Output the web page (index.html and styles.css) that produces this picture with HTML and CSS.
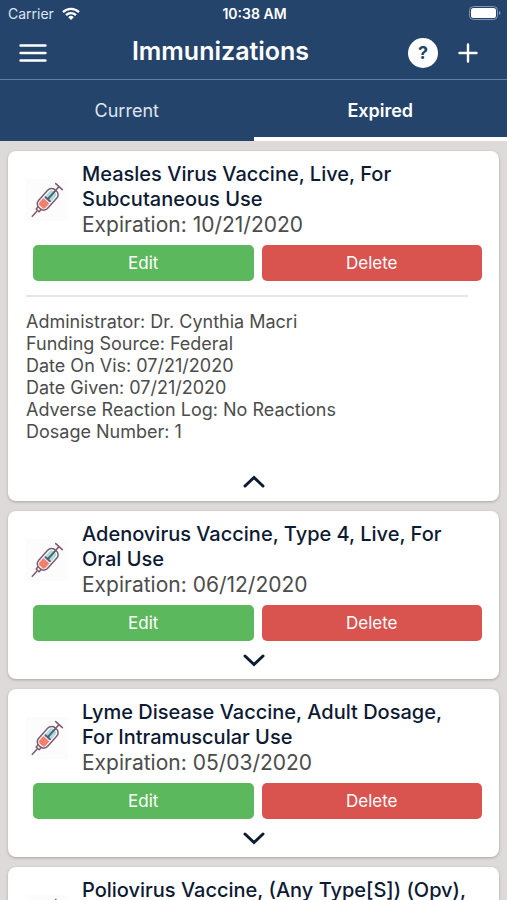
FILE: index.html
```
<!DOCTYPE html>
<html lang="en">
<head>
    <meta charset="UTF-8">
    <meta name="viewport" content="width=device-width, initial-scale=1.0">
    <title>Immunizations</title>
    <link rel="stylesheet" href="styles.css">
</head>
<body>

    <!-- Shared icons -->
    <svg class="sprite" aria-hidden="true">
        <symbol id="syringe" viewBox="0 0 42 42">
            <g transform="translate(21 21) rotate(42)" fill="none" stroke="#7d5a6e" stroke-width="1.5" stroke-linecap="round" stroke-linejoin="round">
                <path d="M-4 -8q0 -3 3 -3h2q3 0 3 3v7h-8z" fill="#a9deda" stroke="none"/>
                <path d="M-4 1h8v6q0 2 -2 2h-4q-2 0 -2 -2z" fill="#f47f6b" stroke="none"/>
                <rect x="-6" y="-13" width="12" height="24" rx="5"/>
                <path d="M0 -12V-1M-3 -1h6" stroke="#55607a" stroke-width="2"/>
                <path d="M0 -18v5M-4.5 -18h9M-2 11v3h4v-3M0 14v8"/>
            </g>
        </symbol>
        <symbol id="chevron" viewBox="0 0 24 14">
            <path d="M3 3l9 8.5l9 -8.5" fill="none" stroke="#0d1a33" stroke-width="3" stroke-linecap="round"/>
        </symbol>
    </svg>

    <div class="app">
        <header class="header">
            <div class="status-bar">
                <span class="carrier">
                    Carrier
                    <svg width="18" height="14" viewBox="0 0 18 14" fill="none" stroke="#fff" stroke-width="2.3">
                        <path d="M1 5.2a11.5 11.5 0 0 1 16 0M4 8.2a7.3 7.3 0 0 1 10 0"/>
                        <path d="M9 13l-2.8 -2.8a4 4 0 0 1 5.6 0z" fill="#fff" stroke="none"/>
                    </svg>
                </span>
                <span class="time">10:38 AM</span>
                <svg class="battery" width="32" height="15" viewBox="0 0 32 15">
                    <rect x="0.5" y="0.5" width="28" height="13" rx="4" fill="none" stroke="#8496b3"/>
                    <rect x="2" y="2" width="25" height="10" rx="2.5" fill="#fff"/>
                    <path d="M30 5v4q1.5 -0.5 1.5 -2t-1.5 -2z" fill="#8496b3"/>
                </svg>
            </div>
            <div class="nav-bar">
                <button class="icon-button" aria-label="Menu">
                    <svg width="28" height="18" viewBox="0 0 28 18" stroke="#fff" stroke-width="2.4" stroke-linecap="round">
                        <path d="M1.5 1.5h25M1.5 9h25M1.5 16.5h25"/>
                    </svg>
                </button>
                <h1>Immunizations</h1>
                <div class="nav-actions">
                    <button class="help-button" aria-label="Help">?</button>
                    <button class="icon-button" aria-label="Add">
                        <svg width="20" height="20" viewBox="0 0 20 20" stroke="#fff" stroke-width="2.4" stroke-linecap="round">
                            <path d="M10 1.5v17M1.5 10h17"/>
                        </svg>
                    </button>
                </div>
            </div>
            <nav class="tabs">
                <a href="#current">Current</a>
                <a href="#expired" class="active">Expired</a>
            </nav>
        </header>

        <main class="list">
            <article class="card">
                <div class="card-top">
                    <svg class="syringe"><use href="#syringe"/></svg>
                    <div>
                        <h2>Measles Virus Vaccine, Live, For Subcutaneous Use</h2>
                        <p class="expiration">Expiration: 10/21/2020</p>
                    </div>
                </div>
                <div class="actions">
                    <button class="edit">Edit</button>
                    <button class="delete">Delete</button>
                </div>
                <div class="details">
                    <p>Administrator: Dr. Cynthia Macri</p>
                    <p>Funding Source: Federal</p>
                    <p>Date On Vis: 07/21/2020</p>
                    <p>Date Given: 07/21/2020</p>
                    <p>Adverse Reaction Log: No Reactions</p>
                    <p>Dosage Number: 1</p>
                </div>
                <button class="toggle open" aria-label="Hide details"><svg><use href="#chevron"/></svg></button>
            </article>

            <article class="card">
                <div class="card-top">
                    <svg class="syringe"><use href="#syringe"/></svg>
                    <div>
                        <h2>Adenovirus Vaccine, Type 4, Live, For Oral Use</h2>
                        <p class="expiration">Expiration: 06/12/2020</p>
                    </div>
                </div>
                <div class="actions">
                    <button class="edit">Edit</button>
                    <button class="delete">Delete</button>
                </div>
                <button class="toggle" aria-label="Show details"><svg><use href="#chevron"/></svg></button>
            </article>

            <article class="card">
                <div class="card-top">
                    <svg class="syringe"><use href="#syringe"/></svg>
                    <div>
                        <h2>Lyme Disease Vaccine, Adult Dosage, For Intramuscular Use</h2>
                        <p class="expiration">Expiration: 05/03/2020</p>
                    </div>
                </div>
                <div class="actions">
                    <button class="edit">Edit</button>
                    <button class="delete">Delete</button>
                </div>
                <button class="toggle" aria-label="Show details"><svg><use href="#chevron"/></svg></button>
            </article>

            <article class="card">
                <div class="card-top">
                    <svg class="syringe"><use href="#syringe"/></svg>
                    <div>
                        <h2>Poliovirus Vaccine, (Any Type[S]) (Opv),</h2>
                    </div>
                </div>
            </article>
        </main>
    </div>

</body>
</html>
```
FILE: styles.css
```
:root {
    --navy: #25446c;
    --line: #5f7da6;
    --page: #dedad9;
    --title: #0d1a33;
    --text: #4c4c4c;
    --green: #5cb85c;
    --red: #d9534f;
}

* {
    box-sizing: border-box;
}

body {
    margin: 0;
    background: var(--page);
    font-family: Inter, "Liberation Sans", sans-serif;
    color: var(--text);
}

h1, h2, p {
    margin: 0;
}

button {
    border: none;
    padding: 0;
    background: none;
    font-family: inherit;
    cursor: pointer;
}

svg {
    display: block;
}

.sprite {
    position: absolute;
    width: 0;
    height: 0;
}

.app {
    display: flex;
    flex-direction: column;
    height: 100vh;
}

/* Header */
.header {
    flex: none;
    background: var(--navy);
    color: #fff;
}

.status-bar {
    display: grid;
    grid-template-columns: 1fr auto 1fr;
    align-items: center;
    height: 27px;
    padding: 0 6px 0 8px;
    font-size: 14px;
}

.carrier {
    display: flex;
    align-items: center;
    gap: 8px;
    color: #dde5f0;
}

.time {
    font-weight: 600;
}

.battery {
    justify-self: end;
}

.nav-bar {
    display: flex;
    align-items: center;
    height: 53px;
    padding: 0 29px 0 19px;
    border-bottom: 1px solid var(--line);
}

.nav-bar h1 {
    flex: 1;
    padding-bottom: 4px;
    font-size: 25px;
    font-weight: 600;
    line-height: 30px;
    text-align: center;
}

.nav-actions {
    display: flex;
    align-items: center;
    gap: 20px;
    padding-left: 14px;
}

.help-button {
    width: 30px;
    height: 30px;
    border-radius: 50%;
    background: #fff;
    color: var(--navy);
    font-size: 18px;
    font-weight: 700;
    line-height: 30px;
}

.tabs {
    display: grid;
    grid-template-columns: 1fr 1fr;
}

.tabs a {
    height: 61px;
    padding-top: 4px;
    border-bottom: 4px solid transparent;
    color: #dde5f0;
    font-size: 18px;
    line-height: 53px;
    text-align: center;
    text-decoration: none;
}

.tabs a.active {
    border-bottom-color: #fff;
    color: #fff;
    font-weight: 600;
}

/* Cards */
.list {
    flex: 1;
    display: flex;
    flex-direction: column;
    gap: 10px;
    min-height: 0;
    padding: 10px 8px;
    overflow-y: auto;
    scrollbar-width: none;
}

.card {
    flex: none;
    border-radius: 8px;
    background: #fff;
    box-shadow: 0 1px 3px rgba(0, 0, 0, 0.25);
}

.card-top {
    display: flex;
    gap: 14px;
    min-height: 86px;
    padding: 11px 30px 0 18px;
}

.syringe {
    flex: none;
    width: 42px;
    height: 42px;
    margin-top: 17px;
    background: #fdfcfd;
}

.card h2 {
    color: var(--title);
    font-size: 20px;
    font-weight: 500;
    line-height: 25px;
}

.expiration {
    font-size: 21px;
    line-height: 25px;
}

.actions {
    display: grid;
    grid-template-columns: 1fr 1fr;
    gap: 8px;
    padding: 8px 17px 0 25px;
}

.actions button {
    height: 36px;
    border-radius: 5px;
    color: #fff;
    font-size: 17px;
}

.actions .edit {
    background: var(--green);
}

.actions .delete {
    background: var(--red);
}

.details {
    margin: 14px 31px 20px 18px;
    padding-top: 14px;
    border-top: 2px solid #e6e6e6;
    font-size: 18px;
    line-height: 22px;
}

.toggle {
    display: flex;
    align-items: center;
    justify-content: center;
    width: 100%;
    height: 38px;
}

.toggle svg {
    width: 24px;
    height: 14px;
}

.toggle.open svg {
    transform: rotate(180deg);
}
```
